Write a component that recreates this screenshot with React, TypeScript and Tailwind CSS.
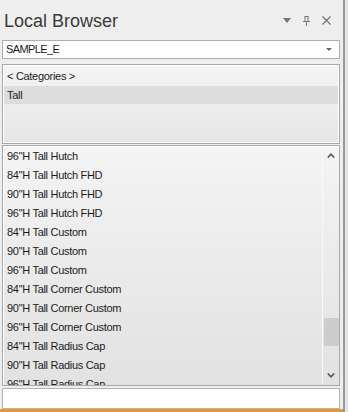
import React from 'react';

const items = [
  '96"H Tall Hutch',
  '84"H Tall Hutch FHD',
  '90"H Tall Hutch FHD',
  '96"H Tall Hutch FHD',
  '84"H Tall Custom',
  '90"H Tall Custom',
  '96"H Tall Custom',
  '84"H Tall Corner Custom',
  '90"H Tall Corner Custom',
  '96"H Tall Corner Custom',
  '84"H Tall Radius Cap',
  '90"H Tall Radius Cap',
  '96"H Tall Radius Cap',
];

export default function App() {
  return (
    <div className="w-[348px] h-[412px] bg-[#eeeeee] flex overflow-hidden font-['Liberation_Sans',Arial,sans-serif] text-[#1c1c1c]">
      <div className="w-[343px] flex flex-col">
        {/* Title bar */}
        <div className="h-[40px] flex items-center pl-[4px] pr-[12px] pt-[2px]">
          <span className="text-[18px] text-[#3a3a3a] leading-none">Local Browser</span>
          <div className="ml-auto flex items-center gap-[12px] text-[#777777]">
            <svg width="8" height="5" viewBox="0 0 8 5">
              <path d="M0 0 L8 0 L4 5 Z" fill="#777777" />
            </svg>
            <svg width="7" height="10" viewBox="0 0 7 10">
              <path d="M1.5 0.5 H5.5 M2 0.5 V5.5 M5 0.5 V5.5 M0 5.5 H7 M3.5 5.5 V10" stroke="#777777" strokeWidth="1" fill="none" />
            </svg>
            <svg width="9" height="9" viewBox="0 0 9 9">
              <path d="M0.5 0.5 L8.5 8.5 M8.5 0.5 L0.5 8.5" stroke="#777777" strokeWidth="1.3" fill="none" />
            </svg>
          </div>
        </div>

        {/* Combo box */}
        <div className="mx-[2px] ml-[2px] mr-[3px] h-[19px] bg-white border border-[#abadb3] flex items-center pl-[3px] pr-[7px]">
          <span className="text-[11px] tracking-[-0.6px] leading-none">SAMPLE_E</span>
          <svg className="ml-auto" width="6" height="3" viewBox="0 0 6 3">
            <path d="M0 0 L6 0 L3 3 Z" fill="#666666" />
          </svg>
        </div>

        {/* Categories */}
        <div className="mt-[5px] ml-[2px] mr-[3px] h-[80px] border border-[#a8a8a8] bg-gradient-to-b from-[#f4f4f4] to-[#e6e6e6] shadow-[inset_1px_1px_0_#ffffff,inset_-1px_-1px_0_#ffffff] pt-[1px] px-[1px]">
          <div className="h-[20px] flex items-center pl-[3px] text-[11px] tracking-[-0.3px]">&lt; Categories &gt;</div>
          <div className="h-[18px] flex items-center pl-[3px] bg-[#dddddd] text-[11px] tracking-[-0.3px]">Tall</div>
        </div>

        {/* Item list */}
        <div className="mt-[1px] ml-[2px] mr-[3px] h-[242px] border border-[#a8a8a8] bg-gradient-to-b from-[#f4f4f4] to-[#e2e2e2] shadow-[inset_1px_1px_0_#ffffff] flex overflow-hidden">
          <div className="flex-1 pt-[1px] pl-[4px] overflow-hidden">
            {items.map((t) => (
              <div key={t} className="h-[19px] flex items-center text-[11px] tracking-[-0.3px] whitespace-nowrap">
                {t}
              </div>
            ))}
          </div>
          <div className="w-[17px] border-l border-[#f8f8f8] flex flex-col items-center">
            <div className="h-[19px] flex items-center justify-center">
              <svg width="8" height="5" viewBox="0 0 8 5">
                <path d="M0.8 4.5 L4 1.2 L7.2 4.5" stroke="#555555" strokeWidth="1.6" fill="none" />
              </svg>
            </div>
            <div className="flex-1 w-[15px] flex flex-col">
              <div className="h-[153px]"></div>
              <div className="h-[28px] bg-[#cdcdcd]"></div>
            </div>
            <div className="h-[20px] flex items-center justify-center">
              <svg width="8" height="5" viewBox="0 0 8 5">
                <path d="M0.8 0.5 L4 3.8 L7.2 0.5" stroke="#555555" strokeWidth="1.6" fill="none" />
              </svg>
            </div>
          </div>
        </div>

        {/* Bottom text box */}
        <div className="mt-[2px] ml-[2px] mr-[3px] h-[21px] bg-white border border-[#b4b4b4]"></div>

        <div className="mt-auto h-[3px] bg-[#e8963c]"></div>
      </div>
      <div className="w-[2px] bg-[#9a9a9a]"></div>
      <div className="flex-1 bg-[#e4e4e4]"></div>
    </div>
  );
}
